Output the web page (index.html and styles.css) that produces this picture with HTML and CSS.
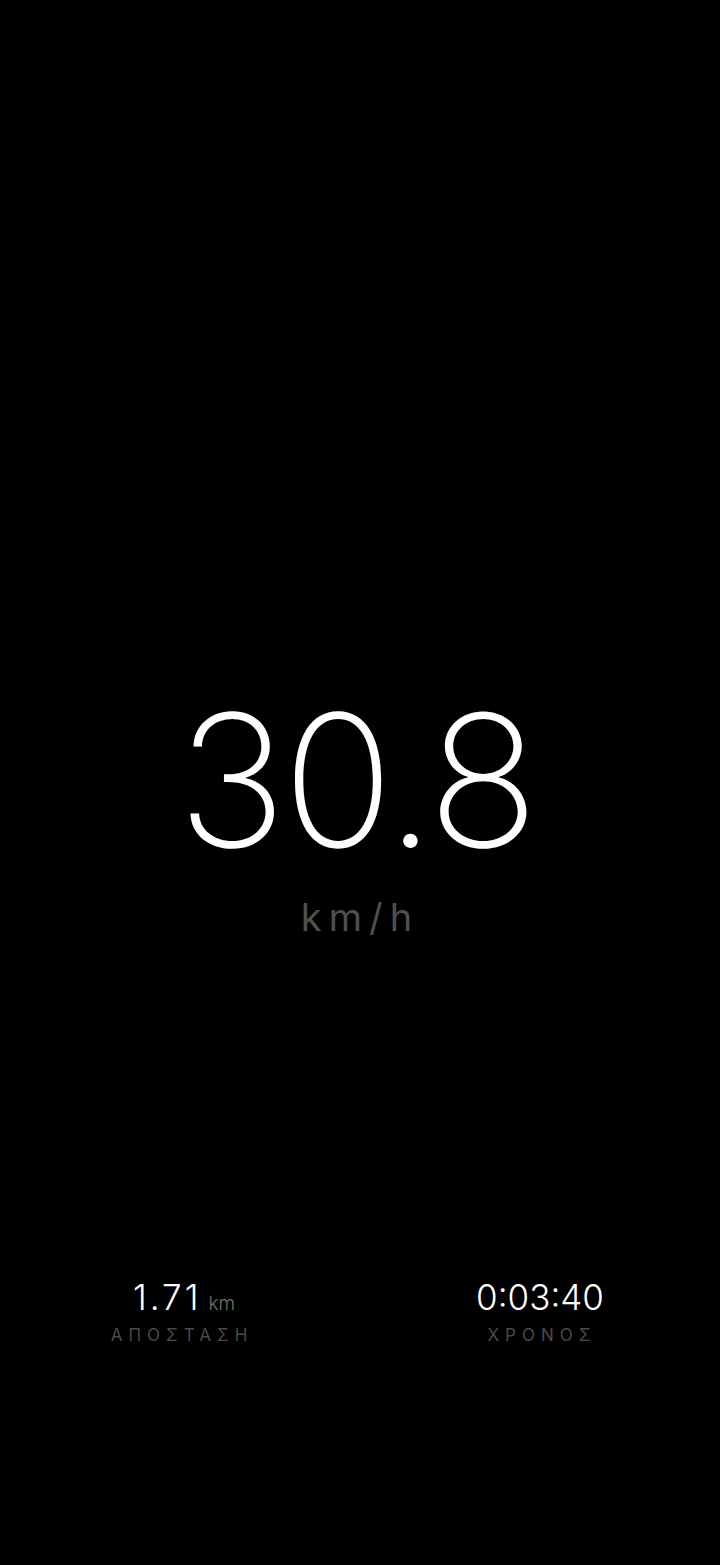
FILE: index.html
```html
<!DOCTYPE html>
<html lang="el">
<head>
<meta charset="utf-8">
<link rel="stylesheet" href="styles.css">
</head>
<body>
<div class="screen">
  <main class="speed">
    <div class="speed-value">30.8</div>
    <div class="speed-unit">km/h</div>
  </main>
  <section class="stats">
    <div class="stat">
      <div class="stat-value stat-value--distance">1.71<span class="stat-unit">km</span></div>
      <div class="stat-label">ΑΠΟΣΤΑΣΗ</div>
    </div>
    <div class="stat">
      <div class="stat-value">0:03:40</div>
      <div class="stat-label">ΧΡΟΝΟΣ</div>
    </div>
  </section>
</div>
</body>
</html>
```
FILE: styles.css
```css
html, body {
  margin: 0;
  padding: 0;
  background: #000;
}
body {
  font-family: "Inter", "Roboto", "Noto Sans", sans-serif;
  color: #fff;
}
.screen {
  height: 1565px;
  display: flex;
  flex-direction: column;
}
.speed {
  padding-top: 688px;
  display: flex;
  flex-direction: column;
  align-items: center;
}
.speed-value {
  font-size: 184px;
  font-weight: 200;
  line-height: 184px;
  letter-spacing: -4px;
  margin-right: 8px;
}
.speed-unit {
  margin-top: 22px;
  font-size: 38px;
  font-weight: 400;
  letter-spacing: 7px;
  color: #4f4f4f;
  line-height: 46px;
}
.stats {
  margin-top: 335px;
  display: grid;
  grid-template-columns: 1fr 1fr;
}
.stat {
  display: flex;
  flex-direction: column;
  align-items: center;
}
.stat-value {
  font-size: 35px;
  font-weight: 300;
  line-height: 44px;
  height: 44px;
  letter-spacing: 0;
  white-space: nowrap;
}
.stat-value--distance {
  letter-spacing: 3px;
  margin-left: 8px;
}
.stat-unit {
  font-size: 19px;
  line-height: 0;
  color: #727272;
  margin-left: 7px;
  letter-spacing: 0;
}
.stat-label {
  margin-top: 6px;
  font-size: 17px;
  letter-spacing: 6px;
  margin-right: -4px;
  color: #4a4a4a;
  line-height: 20px;
}
```
